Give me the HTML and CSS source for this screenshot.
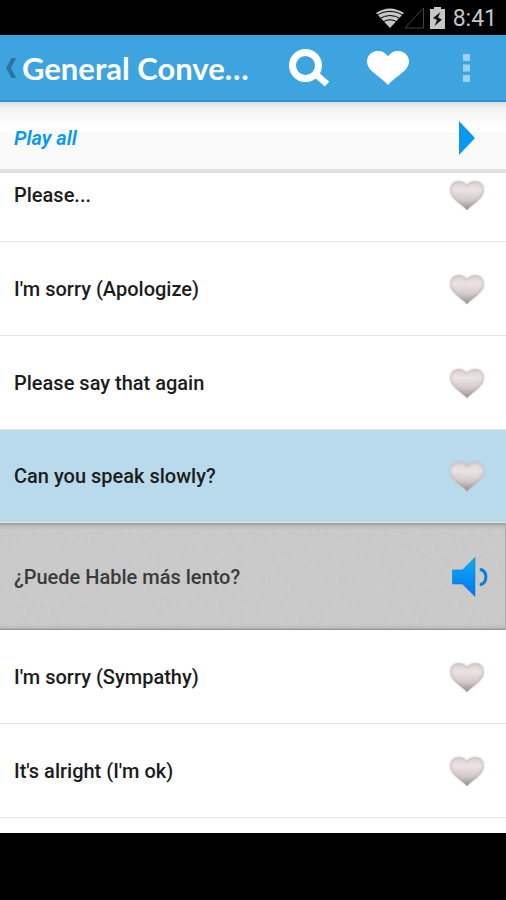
FILE: index.html
```html
<!DOCTYPE html>
<html lang="en">
<head>
<meta charset="utf-8">
<meta name="viewport" content="width=device-width, initial-scale=1">
<title>General Conversation</title>
<link rel="stylesheet" href="styles.css">
</head>
<body>
<svg class="defs" aria-hidden="true">
  <defs>
    <linearGradient id="pearl" x1="0" y1="0" x2="0" y2="1">
      <stop offset="0" stop-color="#ddd3d3"/>
      <stop offset=".3" stop-color="#ebe3e3"/>
      <stop offset=".65" stop-color="#d6cbcb"/>
      <stop offset="1" stop-color="#998e8e"/>
    </linearGradient>
    <linearGradient id="blue" x1="0" y1="0" x2="0" y2="1">
      <stop offset="0" stop-color="#0aaff5"/>
      <stop offset="1" stop-color="#0672f2"/>
    </linearGradient>
    <filter id="paper">
      <feTurbulence type="fractalNoise" baseFrequency=".25" numOctaves="3"/>
      <feColorMatrix values="0 0 0 0 .4  0 0 0 0 .4  0 0 0 0 .4  .2 0 0 0 -.06"/>
    </filter>
    <filter id="soft"><feGaussianBlur stdDeviation=".8"/></filter>
    <symbol id="heart" viewBox="0 0 36 32">
      <path d="M18 6C20.500 3 23.500 2 26.500 2C31.500 2 35 6 35 11C35 19 25 24 18 31C11 24 1 19 1 11C1 6 4.500 2 9.500 2C12.500 2 15.500 3 18 6Z" fill="url(#pearl)"/>
      <path d="M18 6.500C20.500 3.500 23.500 2.500 26.500 2.500C31 2.500 34.500 6 34.500 11C34.500 18.500 25 23.500 18 30C11 23.500 1.500 18.500 1.500 11C1.500 6 5 2.500 9.500 2.500C12.500 2.500 15.500 3.500 18 6.500Z" fill="none" stroke="#a89d9d" stroke-opacity=".5" stroke-width="1.500" filter="url(#soft)"/>
    </symbol>
  </defs>
</svg>

<div class="statusbar">
  <svg width="28" height="20" viewBox="0 0 28 20" aria-hidden="true">
    <path d="M0 5Q14-4 28 5L14 20Z" fill="#c6c6c6"/>
    <path d="M0 7.500Q14-1 28 7.500M3 11Q14 4 25 11M6 14.500Q14 9 22 14.500" fill="none" stroke="#000" stroke-width="1"/>
  </svg>
  <svg width="20" height="22" viewBox="0 0 20 22" aria-hidden="true"><path d="M1 21L19.500 1V21Z" fill="none" stroke="#444" stroke-width="1"/></svg>
  <svg class="battery" width="15" height="22" viewBox="0 0 15 22" aria-hidden="true">
    <path d="M4 0H11V2H15V22H0V2H4Z" fill="#c6c6c6"/>
    <path d="M10.500 5L3 11L7 13L4.500 19L12 12.500L8 10.500Z" fill="#111"/>
  </svg>
  <time>8:41</time>
</div>

<header class="appbar">
  <button class="back" type="button" aria-label="Back">
    <svg width="10" height="20" viewBox="0 0 10 20"><path d="M5.500 0H10L5 10L10 20H5.500L0 10Z" fill="#2b75a3"/></svg>
  </button>
  <h1>General Conve…</h1>
  <button class="action" type="button" aria-label="Search">
    <svg width="40" height="38" viewBox="0 0 40 38"><circle cx="16.500" cy="16.500" r="13" fill="none" stroke="#fff" stroke-width="7"/><path d="M26.500 25L38 35" stroke="#fff" stroke-width="6.500"/></svg>
  </button>
  <button class="action" type="button" aria-label="Favorites">
    <svg width="42" height="34" viewBox="0 0 42 34"><path d="M21 5.500C24 1.500 27 0 31 0C37 0 42 4.500 42 10.500C42 20 30 24 21 34C12 24 0 20 0 10.500C0 4.500 5 0 11 0C15 0 18 1.500 21 5.500Z" fill="#fff"/></svg>
  </button>
  <button class="action" type="button" aria-label="More options">
    <svg width="7" height="28" viewBox="0 0 7 28"><path d="M0 0H7V7H0ZM0 10.500H7V17.500H0ZM0 21H7V28H0Z" fill="#9ed0ef"/></svg>
  </button>
</header>

<button class="playall" type="button">
  <span>Play all</span>
  <svg width="16" height="34" viewBox="0 0 16 34" aria-hidden="true"><path d="M0 0L16 17L0 34Z" fill="#0699ef"/></svg>
</button>

<main class="phrases">
  <ul>
    <li class="row"><span>Please...</span><button type="button" aria-label="Add to favorites"><svg width="36" height="32"><use href="#heart"/></svg></button></li>
    <li class="row"><span>I'm sorry (Apologize)</span><button type="button" aria-label="Add to favorites"><svg width="36" height="32"><use href="#heart"/></svg></button></li>
    <li class="row"><span>Please say that again</span><button type="button" aria-label="Add to favorites"><svg width="36" height="32"><use href="#heart"/></svg></button></li>
    <li class="row selected"><span>Can you speak slowly?</span><button type="button" aria-label="Add to favorites"><svg width="36" height="32"><use href="#heart"/></svg></button></li>
    <li class="translation">
      <svg class="texture" aria-hidden="true"><rect width="100%" height="100%" filter="url(#paper)"/></svg>
      <span lang="es">¿Puede Hable más lento?</span>
      <button type="button" aria-label="Listen">
        <svg width="36" height="40" viewBox="0 0 36 40"><path d="M.5 13H10.500L23 .5V39.500L10.500 27H.5Z" fill="url(#blue)" stroke="#086fb8" stroke-opacity=".5"/><path d="M29 12.500C35.500 15 35.500 25 29 27.500" fill="none" stroke="#087fd8" stroke-width="3" stroke-linecap="round"/></svg>
      </button>
    </li>
    <li class="row"><span>I'm sorry (Sympathy)</span><button type="button" aria-label="Add to favorites"><svg width="36" height="32"><use href="#heart"/></svg></button></li>
    <li class="row"><span>It's alright (I'm ok)</span><button type="button" aria-label="Add to favorites"><svg width="36" height="32"><use href="#heart"/></svg></button></li>
  </ul>
</main>
</body>
</html>
```
FILE: styles.css
```css
* { box-sizing: border-box; }

body {
  margin: 0;
  background: #000;
  color: #1c1c1c;
  font-family: Roboto, "Liberation Sans", sans-serif;
}

button {
  margin: 0;
  padding: 0;
  border: 0;
  background: none;
  color: inherit;
  font: inherit;
  cursor: pointer;
}

svg { display: block; }

.defs {
  position: absolute;
  width: 0;
  height: 0;
}

.statusbar {
  display: flex;
  align-items: center;
  justify-content: flex-end;
  height: 35px;
  padding-right: 9px;
  color: #c6c6c6;
  font-size: 23px;
  line-height: 34px;
}

.statusbar time { font-weight: 400; padding-top: 2px; }
.battery { margin: 0 8px 0 6px; }

.appbar {
  display: flex;
  align-items: center;
  height: 67px;
  padding-left: 6px;
  border-bottom: 2px solid #3090cb;
  background: #3da4e0;
  color: #fff;
}

.back { margin-right: 6px; }

.appbar h1 {
  flex: 1;
  margin: 0;
  font-family: Lato, "Open Sans", sans-serif;
  font-size: 31px;
  font-weight: 700;
  line-height: 40px;
  white-space: nowrap;
}

.action {
  display: grid;
  place-items: center;
  width: 79px;
  height: 65px;
}

.playall {
  display: flex;
  align-items: center;
  justify-content: space-between;
  width: 100%;
  height: 71px;
  padding: 0 31px 0 14px;
  border-bottom: 4px solid #e0e0e0;
  background: linear-gradient(#dcdcdc, #f2f2f2 6px, #fff 24px, #fff 30px, #fafafa 30px);
  color: #0699ef;
  font-size: 20px;
  font-style: italic;
  font-weight: 600;
  line-height: 24px;
}

.playall span { padding-top: 4px; }
.playall svg { margin-top: 4px; }

.phrases {
  overflow: hidden;
  padding-bottom: 15px;
  background: #fff;
}

/* The list is scrolled a little, so its first row is partly cut off. */
.phrases ul {
  margin: -25px 0 0;
  padding: 0;
  list-style: none;
}

.row,
.translation {
  display: flex;
  align-items: center;
  justify-content: space-between;
  height: 94px;
  padding: 0 21px 0 14px;
  font-size: 20px;
  font-weight: 500;
  line-height: 24px;
}

.row { border-bottom: 1px solid #e4e4e4; }

.row.selected {
  height: 93px;
  background: #b9daeb;
}

.translation {
  position: relative;
  height: 107px;
  padding-right: 17px;
  background: linear-gradient(#999, #bdbdbd 3px, #cbcbcb 7px, #cbcbcb 101px, #bdbdbd 105px, #888);
  border-right: 1px solid #aaa;
  color: #3b3b3b;
}

.translation span,
.translation button { position: relative; }

.texture {
  position: absolute;
  inset: 0;
  width: 100%;
  height: 100%;
}
```
